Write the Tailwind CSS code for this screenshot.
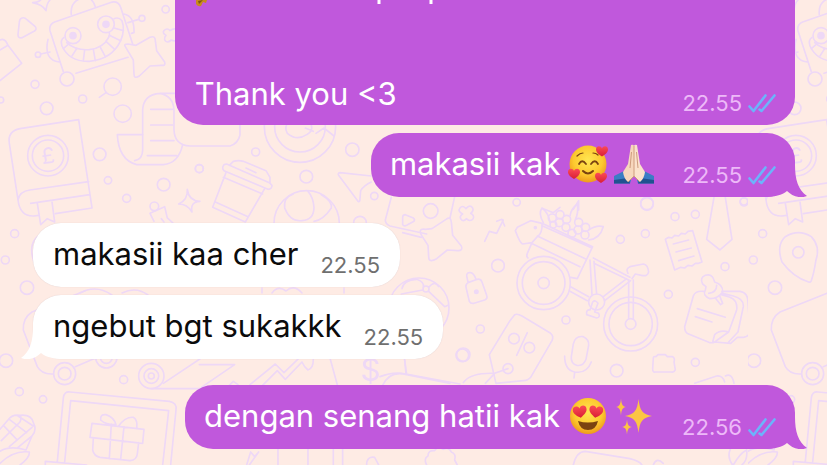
<!DOCTYPE html>
<html lang="id">
<head>
    <meta charset="UTF-8">
    <meta name="viewport" content="width=device-width, initial-scale=1.0">
    <title>Chat</title>
    <script src="https://cdn.jsdelivr.net/npm/@tailwindcss/browser@4"></script>
</head>
<body class="min-h-screen bg-[#feebe4] font-[Inter,sans-serif]">
    <div class="relative min-h-screen overflow-hidden">

        <!-- Doodle wallpaper -->
        <svg class="absolute inset-0 w-full h-full" aria-hidden="true">
            <defs>
                <pattern id="doodles" width="748" height="720" patternUnits="userSpaceOnUse">
                    <g fill="none" stroke="#eed8f6" stroke-width="5" stroke-linejoin="round" stroke-linecap="round">
                        <!-- robot, scroll and book -->
                        <g transform="scale(.3333)">
                            <path d="M98 8Q122 8 128-10M98 8Q128 14 138 32Q140 10 150 0"/>
                            <path d="M64 55Q72 50 82 60L106 80Q112 88 102 94L66 113Q54 116 54 104L58 66Q60 56 64 55Z"/>
                            <path d="M0 120Q12 114 20 128L24 136L65 190L0 242M0 150L24 136"/>
                            <path d="M190 215L150 92Q146 74 164 66L330 8Q354 0 362 22L398 132M228 220L384 172"/>
                            <path d="M214 44Q210 8 240-4M286 20Q280 2 268-6M144 118Q130 180 178 186M150 156L122 162M372 42Q404 48 402 98L394 100M384 68L416 58"/>
                            <circle cx="114" cy="164" r="8"/><circle cx="426" cy="55" r="9"/>
                            <circle cx="219" cy="107" r="24"/><circle cx="318" cy="73" r="25"/>
                            <circle cx="219" cy="107" r="9" fill="#eed8f6"/><circle cx="318" cy="73" r="9" fill="#eed8f6"/>
                            <path d="M192 112Q180 120 186 138Q208 186 268 184Q336 178 362 122Q376 90 366 62Q356 50 342 56M200 128Q226 152 268 149Q310 144 326 112Q330 104 328 98"/>
                            <path d="M204 134L190 146M230 146L216 168M254 150L250 182M280 148L286 182M300 140L316 170M318 124L344 148M328 106L362 122M342 84L370 92"/>
                            <circle cx="201" cy="237" r="21"/>
                            <path d="M376 140Q370 132 384 132L408 136L450 112Q466 106 466 122L470 152L494 186Q498 198 484 196L450 198L418 228Q402 238 402 222L400 180Z"/>
                            <circle cx="497" cy="28" r="11"/>
                            <path d="M492 92Q502 82 510 92Q526 80 532 94L530 112Q530 128 514 120Q500 132 494 120Q492 112 498 106Q486 98 492 92Z"/>
                            <circle cx="338" cy="260" r="26"/><path d="M318 278L298 292"/>
                            <circle cx="105" cy="253" r="12"/><circle cx="248" cy="297" r="12"/><circle cx="140" cy="325" r="19"/>
                            <circle cx="368" cy="341" r="26"/><circle cx="2" cy="300" r="9"/><circle cx="299" cy="463" r="19"/>
                            <circle cx="324" cy="541" r="11"/><circle cx="491" cy="554" r="19"/><circle cx="380" cy="595" r="12"/><circle cx="598" cy="506" r="12"/>
                            <path d="M404 482Q428 478 428 450V330Q430 284 480 280H580M480 280Q520 288 522 330V390Q524 436 570 438H690Q715 430 720 405V330"/>
                            <path d="M428 404H352Q356 480 410 494H490Q536 490 548 434M452 328H518M452 375H518M452 422H522M442 467H530"/>
                            <path d="M236 359L276 624L166 641M236 359L60 386Q22 394 28 430L54 600Q60 650 102 648L116 646M54 600Q58 574 90 570L266 545M92 610L270 584"/>
                            <circle cx="144" cy="467" r="61"/><circle cx="144" cy="467" r="47"/>
                            <path d="M112 610L122 674L142 656L164 666L156 606"/>
                            <path d="M562 568Q566 602 600 604Q570 606 576 636Q562 612 536 612Q564 600 562 568Z"/>
                            <path d="M450 640L494 620L502 654L520 670M450 640L462 664M484 656L492 666"/><circle cx="463" cy="619" r="13"/>
                            <text x="144" y="490" font-family="Inter, sans-serif" font-size="66" text-anchor="middle" transform="rotate(-8 144 467)" fill="#eed8f6" stroke="none">£</text>
                        </g>

                        <!-- cup, target, ball and arrow head -->
                        <g transform="translate(180 120) scale(.3333)">
                            <circle cx="360" cy="20" r="107"/><circle cx="360" cy="20" r="76"/>
                            <path d="M330 0Q310 20 322 40Q350 64 380 44Q400 34 394 14M376 24L400 34M408 40L432 24L462 48"/>
                            <circle cx="227" cy="96" r="12"/><circle cx="58" cy="146" r="12"/><circle cx="517" cy="89" r="20"/><circle cx="379" cy="170" r="19"/>
                            <circle cx="583" cy="228" r="11"/><circle cx="540" cy="308" r="19"/>
                            <path d="M132 134Q124 144 132 152L264 208Q276 208 276 196L268 188L140 132ZM148 136L160 124Q176 120 190 124L258 152L270 172V188M198 144L228 158"/>
                            <path d="M138 158L98 262L196 306L254 206M130 172L248 222M106 246L204 290"/>
                            <circle cx="380" cy="310" r="98"/>
                            <path d="M340 222Q310 232 314 264Q330 306 366 302Q402 300 402 262Q400 232 384 214M424 224Q458 244 454 264Q430 300 402 304"/>
                            <path d="M574 168L480 158Q472 160 476 166L534 244Q540 248 540 236L542 212Q552 196 574 186"/>
                            <path d="M634 232L616 300Q616 312 630 318L740 342M826 80L810 140"/>
                            <path d="M676 284Q668 284 668 292V314Q672 320 680 316L702 304Q706 298 700 294Z"/>
                        </g>

                        <!-- bike with flowers, lock, price tag and microphone -->
                        <g transform="translate(400 190) scale(.3333)">
                            <circle cx="92" cy="63" r="22"/><circle cx="350" cy="37" r="11"/><circle cx="294" cy="227" r="19"/>
                            <circle cx="241" cy="417" r="12"/><circle cx="187" cy="496" r="19"/><circle cx="498" cy="390" r="12"/>
                            <path d="M164 20L150 84M8 128L64 142"/>
                            <path d="M66 138Q52 114 76 118L96 116L138 88Q152 78 154 96L158 136L184 168Q190 182 174 182L142 180L110 206Q86 220 86 200L84 166Z"/>
                            <path d="M180 54Q188 44 198 56Q210 42 218 54Q222 62 212 70Q226 78 218 88Q208 96 200 86Q188 98 182 86Q178 78 188 72Q172 64 180 54Z"/>
                            <path d="M254 154L268 124L290 130L310 90M290 94L306 88L314 108"/>
                            <path d="M204 278Q196 284 198 292L208 334Q212 342 222 340L254 330Q264 326 260 316L246 276Q242 266 232 268ZM204 276L200 258Q200 246 212 248Q222 250 228 268"/>
                            <circle cx="229" cy="305" r="5" fill="#eed8f6"/>
                            <circle cx="57" cy="354" r="90"/><circle cx="78" cy="297" r="9"/>
                            <path d="M6 296Q10 270 50 268Q74 276 70 292M86 292Q104 270 116 290M86 304L134 350L144 346M4 312L68 300"/>
                            <circle cx="431" cy="279" r="80"/><circle cx="431" cy="279" r="64"/><circle cx="431" cy="279" r="17"/>
                            <path d="M384 204Q378 200 382 190L396 158L368 162Q360 160 346 122L352 112L392 92L426 100L578 170L532 266L512 262M426 100Q428 130 412 140L394 160L540 230M412 138L556 206M428 108L576 174"/>
                            <circle cx="406" cy="113" r="3"/>
                            <path d="M430 98Q414 70 426 54Q446 68 450 98M510 78Q512 58 532 42Q536 70 526 88M566 120Q590 104 610 110Q600 146 566 150"/>
                            <circle cx="457" cy="84" r="12"/><circle cx="480" cy="74" r="12"/><circle cx="478" cy="98" r="12"/><circle cx="500" cy="88" r="12"/><circle cx="498" cy="112" r="12"/>
                            <circle cx="536" cy="97" r="12"/><circle cx="516" cy="130" r="12"/><circle cx="534" cy="120" r="12"/><circle cx="557" cy="112" r="12"/><circle cx="555" cy="135" r="12"/><circle cx="460" cy="104" r="10"/>
                            <path d="M512 290L566 320M510 304L562 332M570 210L576 314M582 214L590 312M580 204L690 262M582 220L686 270M610 320L680 266M614 332L692 272"/>
                            <circle cx="590" cy="336" r="24"/><path d="M578 336L570 360Q558 358 560 374L590 384Q602 382 596 370L584 366L594 340Q586 328 578 336Z"/>
                            <circle cx="692" cy="402" r="81"/><circle cx="692" cy="402" r="65"/><circle cx="692" cy="402" r="16"/>
                            <path d="M686 270V386M700 270V388M684 250Q676 236 690 230L730 222Q744 224 746 246Q744 260 724 256L706 252L696 266"/>
                            <path d="M344 374Q352 370 366 378L452 430Q462 438 456 452L392 562Q384 572 370 572L288 580L268 494L330 392ZM350 496L382 428"/>
                            <circle cx="342" cy="446" r="16"/><circle cx="388" cy="473" r="16"/><circle cx="324" cy="536" r="15"/>
                            <path d="M324 536L284 550Q210 548 190 578M284 550L256 580"/>
                            <path d="M520 462Q526 436 550 440Q568 448 566 466L558 508Q550 530 530 526Q512 520 514 500ZM494 498Q494 540 524 546Q560 552 574 516M524 548L522 564"/>
                            <path d="M14 510L18 552M-60 560Q-20 544 18 552L180 582"/>
                        </g>

                        <!-- receipt, tie, notes and folder -->
                        <g transform="translate(600 190) scale(.3333)">
                            <circle cx="141" cy="42" r="19"/><circle cx="225" cy="80" r="12"/><circle cx="286" cy="73" r="12"/><circle cx="136" cy="131" r="12"/>
                            <circle cx="61" cy="148" r="12"/><circle cx="432" cy="36" r="12"/><circle cx="375" cy="230" r="12"/>
                            <circle cx="205" cy="313" r="12"/><circle cx="50" cy="542" r="19"/><circle cx="286" cy="517" r="12"/>
                            <path d="M196 148L206 142L216 144L224 136L236 138L244 130L256 132L264 124L278 122L306 216L296 220L286 220L276 228L264 226L254 234L242 232L224 240ZM220 162L266 150M228 186L274 174M236 212L282 198"/>
                            <path d="M342 22L320 148L360 180L396 148L376 22"/>
                            <path d="M310 304Q286 302 280 318L254 410Q254 428 266 432L330 458Q344 460 352 450L386 426L410 360Q414 332 390 322L364 314M292 356L376 382M286 380L336 396M386 426Q360 418 344 434L338 456M368 310L400 318Q432 326 430 350L414 426L386 456M366 304L420 304Q444 308 444 336L450 424Q448 440 430 442L412 442L392 460L344 456"/>
                            <path d="M308 282Q298 264 316 256Q336 250 342 270L344 276Q370 284 368 306Q354 326 330 326Q306 316 316 300L318 290ZM326 310Q350 308 350 286M346 324L362 344L368 340L360 320"/>
                            <path d="M160 504Q160 498 168 500L174 494H196L202 500H218Q226 504 222 516L226 540Q222 548 214 546H166Q158 548 158 536Z"/>
                            <path d="M284 580L350 558Q368 556 374 576M376 558Q396 548 402 580"/>
                        </g>

                        <!-- map pin and luggage at the left edge of the tile -->
                        <g transform="translate(-148 190) scale(.3333)">
                            <circle cx="488" cy="131" r="12"/><circle cx="460" cy="210" r="12"/><circle cx="525" cy="293" r="20"/><circle cx="462" cy="512" r="20"/>
                            <path d="M626 276Q580 262 546 216Q528 166 556 140Q596 116 634 140Q662 170 648 210Q642 250 634 272Q632 278 626 276Z"/><circle cx="595" cy="187" r="17"/>
                            <path d="M700 302L540 366Q512 384 514 420L556 530Q570 554 602 552M670 530L740 500"/>
                            <circle cx="638" cy="551" r="33"/><circle cx="638" cy="551" r="19"/>
                        </g>

                        <!-- laptop with a gift, corn, chart and coins -->
                        <g transform="translate(0 350) scale(.3333)">
                            <circle cx="319" cy="22" r="32"/><circle cx="319" cy="22" r="18"/>
                            <circle cx="454" cy="78" r="38"/><circle cx="454" cy="78" r="22"/><circle cx="454" cy="78" r="9"/>
                            <circle cx="371" cy="89" r="12"/><circle cx="58" cy="125" r="12"/><circle cx="129" cy="148" r="11"/>
                            <path d="M454 116H600M490 100L640 0M598 44H704L604 112"/>
                            <path d="M172 334L190 144Q192 124 210 126L508 154Q532 158 528 180L512 345M194 336L212 152L506 182L488 345M136 334L260 345M136 334V345"/>
                            <path d="M276 220L270 262L428 280L432 238ZM334 222L328 326M372 230L362 328M280 266L278 300Q282 318 300 322L390 332Q410 330 412 312L416 278M348 224Q316 224 302 210Q300 192 318 194Q342 202 348 224ZM356 228Q376 200 400 202Q414 210 410 236"/>
                            <path d="M0 238L24 210Q36 192 60 196Q94 192 100 218Q112 240 96 258L78 300Q30 286 0 304M10 226L50 268M28 208L80 248M54 198L100 228M4 272L60 216Q66 200 60 196M28 290L96 232M54 292L96 258M0 340Q40 300 88 306Q90 322 60 345"/>
                            <path d="M684 110L700 94L714 104M750 104L826 42L852 68L912 10M784 110L832 62L856 88L906 36Q912 50 924 60Q940 56 940 28M990 24L1012 104"/>
                            <path d="M1148 106Q1170 60 1220 74L1350 100M1210 0L1220 72"/>
                            <circle cx="1390" cy="14" r="20"/>
                            <text x="1112" y="94" font-family="Inter, sans-serif" font-size="94" text-anchor="middle" fill="#eed8f6" stroke="none">$</text>
                            <path d="M748 345L776 306L764 320L752 306L740 345M834 296V345M924 296V345M1000 296V345M1028 296V345M1100 345Q1100 318 1124 322L1136 345"/>
                            <path d="M1280 345Q1270 326 1284 318Q1284 300 1304 302Q1314 286 1330 298Q1346 290 1354 306Q1370 312 1364 330L1372 345"/>
                            <path d="M1720 345Q1730 304 1756 304L1890 326Q1920 334 1926 345M1960 345Q1970 320 1990 340M2192 296Q2180 320 2198 345M2200 345Q2220 310 2240 300Q2244 330 2226 345"/>
                        </g>

                        <!-- small items beside the bubbles -->
                        <g transform="translate(540 130) scale(.3333)">
                            <circle cx="321" cy="220" r="19"/><circle cx="612" cy="214" r="11"/>
                            <path d="M10 236L40 248L60 232M100 238L116 212V240"/>
                        </g>
                        <path d="M80 293Q96 284 112 295M122 293Q136 286 148 295M262 288V293M272 293Q278 285 286 291Q294 284 302 293M344 288V293" stroke-width="1.6"/>
                    </g>
                </pattern>

                <g id="ticks" fill="none" stroke="#6cb4fb" stroke-width="2.6" stroke-linecap="round" stroke-linejoin="round">
                    <path d="M1.5 13.5L5.5 18L17.5 2.5M11.5 16.5L13.5 18L26.5 2.5"/>
                </g>
                <path id="tail-right" d="M32 0C32 14 35 25 44 31C37 34 29 31 24 26C19 30 12 32 0 32V0Z"/>
                <path id="tail-left" d="M12 0C12 14 9 25 0 31C7 34 15 31 20 26C25 30 32 32 44 32V0Z"/>
                <radialGradient id="face" cx=".5" cy=".4" r=".6">
                    <stop offset="0" stop-color="#ffe652"/>
                    <stop offset=".65" stop-color="#fdc92f"/>
                    <stop offset="1" stop-color="#ee9a1c"/>
                </radialGradient>
                <linearGradient id="heart-fill" x1="0" y1="0" x2="0" y2="1">
                    <stop offset="0" stop-color="#fb4a55"/>
                    <stop offset="1" stop-color="#d91f35"/>
                </linearGradient>
                <path id="heart" d="M0 5C-3 3-6 1-6-2C-6-6-1-6 0-3C1-6 6-6 6-2C6 1 3 3 0 5Z" fill="url(#heart-fill)"/>
                <path id="spark" d="M0-10C1-3 3-1 10 0C3 1 1 3 0 10C-1 3-3 1-10 0C-3-1-1-3 0-10Z"/>
            </defs>
            <rect width="100%" height="100%" fill="url(#doodles)"/>
        </svg>

        <main class="relative flex flex-col px-8 pb-4 text-[31px] leading-10">

            <section class="w-[75vw] max-w-full self-end rounded-b-[28px] bg-[#c058dc] pl-5 pr-[19px] pb-2 text-white">
                <svg class="block h-2 w-full" aria-hidden="true">
                    <path d="M1 0H12L11 3L8 2L6 6Q3 7 1 4Z" fill="#c98a1a"/>
                    <path d="M3 1L8 0L4 4Z" fill="#7c5410"/>
                    <path d="M184 0V4M236 0V4" stroke="#fff" stroke-width="3"/>
                </svg>
                <div class="mt-[66px] flex items-end justify-between">
                    <p class="mb-[3px]">Thank you &lt;3</p>
                    <div class="flex items-center gap-[6px] text-[22px] leading-7 text-[#edb9f8]">
                        <time>22.55</time>
                        <svg class="h-5 w-7" role="img" aria-label="Read"><use href="#ticks"/></svg>
                    </div>
                </div>
            </section>

            <section class="relative isolate mt-2 flex max-w-full items-end gap-7 self-end rounded-[28px] bg-[#c058dc] px-[19px] pt-[11px] pb-2 text-white">
                <svg class="absolute -right-3 bottom-0 -z-10 h-8 w-11 fill-[#c058dc]" aria-hidden="true"><use href="#tail-right"/></svg>
                <p class="mb-[5px] flex items-center gap-2">
                    makasii kak
                    <span class="flex gap-[6px]">
                        <svg class="h-10 w-10" viewBox="0 0 40 40" role="img" aria-label="Smiling face with hearts">
                            <circle cx="20" cy="20" r="18.5" fill="url(#face)"/>
                            <g fill="none" stroke="#7a4310" stroke-width="1.8" stroke-linecap="round">
                                <path d="M11 20Q14 14.500 18 20M23 20Q27 14.500 30 20"/>
                                <path d="M9 12Q12 9 15 9M25 9Q28 9 30 11" stroke-width="1.2"/>
                                <path d="M15 27Q20 32 25 27" stroke-width="2"/>
                            </g>
                            <use href="#heart" x="34" y="7.500"/>
                            <use href="#heart" x="6" y="30"/>
                            <use href="#heart" x="33" y="34"/>
                        </svg>
                        <svg class="h-10 w-10" viewBox="0 0 40 40" role="img" aria-label="Folded hands">
                            <path d="M0 32L10 27L17 36L16 39.500H0ZM40 32L30 27L23 36L24 39.500H40Z" fill="#3a7dc4"/>
                            <path d="M0 36L14 34L16 39.500H0ZM40 36L26 34L24 39.500H40Z" fill="#215290"/>
                            <path d="M17 1Q19.500 0 20 2V32L14 38Q10 35 9 28L14 20Z" fill="#f7d7bd"/>
                            <path d="M23 1Q20.500 0 20 2V32L26 38Q30 35 31 28L26 20Z" fill="#fbe2cc"/>
                            <path d="M20 2V32L14 38M20 32L26 38M17.500 8L16 24M22.500 8L24 24" fill="none" stroke="#cf9c7e" stroke-width="1"/>
                        </svg>
                    </span>
                </p>
                <div class="flex items-center gap-[6px] text-[22px] leading-7 text-[#edb9f8]">
                    <time>22.55</time>
                    <svg class="h-5 w-7" role="img" aria-label="Read"><use href="#ticks"/></svg>
                </div>
            </section>

            <section class="ml-px mt-[26px] flex max-w-full items-end gap-[22px] self-start rounded-[28px] bg-white px-5 pt-[11px] pb-2 text-[#0b0b0b] shadow-[0_0_1px_#d9c4c4]">
                <p class="mb-[5px]">makasii kaa cher</p>
                <time class="text-[22px] leading-7 text-[#6f6f6f]">22.55</time>
            </section>

            <section class="relative isolate ml-px mt-2 flex max-w-full items-end gap-[22px] self-start rounded-[28px] bg-white px-5 pt-[11px] pb-2 text-[#0b0b0b] shadow-[0_0_1px_#d9c4c4]">
                <svg class="absolute -left-3 bottom-0 -z-10 h-8 w-11 fill-white" aria-hidden="true"><use href="#tail-left"/></svg>
                <p class="mb-[5px]">ngebut bgt sukakkk</p>
                <time class="text-[22px] leading-7 text-[#6f6f6f]">22.55</time>
            </section>

            <section class="relative isolate mt-[26px] flex max-w-full items-end gap-7 self-end rounded-[28px] bg-[#c058dc] px-[19px] pt-[11px] pb-2 text-white">
                <svg class="absolute -right-3 bottom-0 -z-10 h-8 w-11 fill-[#c058dc]" aria-hidden="true"><use href="#tail-right"/></svg>
                <p class="mb-[5px] flex items-center gap-2">
                    dengan senang hatii kak
                    <span class="flex gap-[6px]">
                        <svg class="h-10 w-10" viewBox="0 0 40 40" role="img" aria-label="Smiling face with heart eyes">
                            <circle cx="20" cy="20" r="18" fill="url(#face)"/>
                            <use href="#heart" transform="translate(12 16) rotate(-8) scale(1.150)"/>
                            <use href="#heart" transform="translate(28 16) rotate(8) scale(1.150)"/>
                            <path d="M10 25Q20 28 30 25Q28 34 20 34Q12 34 10 25Z" fill="#7a4310"/>
                        </svg>
                        <svg class="h-10 w-10" viewBox="0 0 40 40" role="img" aria-label="Sparkles" fill="#fcc544">
                            <use href="#spark" transform="translate(24.500 20) scale(1.350 1.700)"/>
                            <use href="#spark" transform="translate(7 11) scale(.5 .85)"/>
                            <use href="#spark" transform="translate(13 31) scale(.5 .75)"/>
                        </svg>
                    </span>
                </p>
                <div class="flex items-center gap-[6px] text-[22px] leading-7 text-[#edb9f8]">
                    <time>22.56</time>
                    <svg class="h-5 w-7" role="img" aria-label="Read"><use href="#ticks"/></svg>
                </div>
            </section>

        </main>
    </div>
</body>
</html>
